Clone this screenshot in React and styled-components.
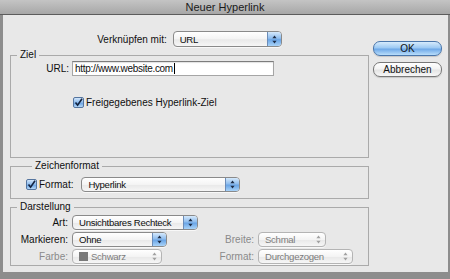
import React from 'react';
import styled, { createGlobalStyle } from 'styled-components';

const GlobalStyle = createGlobalStyle`
  html, body { margin: 0; padding: 0; }
  body {
    font-family: "Liberation Sans", Arial, sans-serif;
    font-size: 10px;
    color: #0f0f0f;
  }
`;

const Window = styled.div`
  width: 450px;
  height: 279px;
  background: #8d8d8d;
  display: flex;
  flex-direction: column;
`;

const TitleBar = styled.div`
  height: 14px;
  flex: none;
  background: linear-gradient(#c4c4c4, #a7a7a7);
  border-bottom: 1px solid #5c5c5c;
  display: flex;
  align-items: center;
  justify-content: center;
  font-size: 11px;
  color: #1a1a1a;
`;

const Body = styled.div`
  flex: 1;
  margin: 0 2px 7px 3px;
  background: #e8e8e8;
  display: flex;
  padding: 16px 6px 0 7px;
`;

const Main = styled.div`
  width: 359px;
  display: flex;
  flex-direction: column;
`;

const Buttons = styled.div`
  margin-left: 4px;
  width: 69px;
  display: flex;
  flex-direction: column;
  gap: 6px;
  padding-top: 10px;
`;

const Button = styled.div`
  height: 13px;
  border-radius: 7px;
  display: flex;
  align-items: center;
  justify-content: center;
  font-size: 10px;
  color: #111;
  border: 1px solid ${p => (p.$primary ? '#4a76ab' : '#777')};
  background: ${p =>
    p.$primary
      ? 'linear-gradient(#d6ebfc, #9cc9f3 45%, #6fa9e8 55%, #b9defb)'
      : 'linear-gradient(#ffffff, #f3f3f3 45%, #e4e4e4 55%, #f7f7f7)'};
  box-shadow: 0 1px 1px rgba(0, 0, 0, 0.15);
`;

const TopRow = styled.div`
  display: flex;
  justify-content: center;
  align-items: center;
  gap: 6px;
  height: 16px;
`;

const Label = styled.span`
  color: ${p => (p.$disabled ? '#8a8a8a' : '#0f0f0f')};
  white-space: nowrap;
`;

const Group = styled.fieldset`
  margin: 2px 0 0 0;
  padding: ${p => p.$pad};
  border: 1px solid #aaaaaa;
  min-width: 0;
  height: ${p => p.$h}px;
  box-sizing: border-box;
`;

const Legend = styled.legend`
  padding: 0 3px;
  margin-left: 6px;
  line-height: 12px;
  font-size: 10px;
`;

const Row = styled.div`
  display: flex;
  align-items: center;
  gap: ${p => p.$gap || 3}px;
  padding-left: ${p => p.$indent || 0}px;
  margin-top: ${p => p.$mt || 0}px;
`;

const FieldLabel = styled(Label)`
  width: 58px;
  text-align: right;
`;

const TextInput = styled.div`
  width: 202px;
  height: 15px;
  box-sizing: border-box;
  background: #fff;
  border: 1px solid #a5a5a5;
  border-top-color: #7c7c7c;
  box-shadow: inset 0 1px 1px rgba(0, 0, 0, 0.12);
  display: flex;
  align-items: center;
  padding-left: 2px;
  font-size: 10px;
  letter-spacing: -0.3px;
`;

const Caret = styled.span`
  width: 1px;
  height: 11px;
  margin-left: 1px;
  background: #000;
`;

const Box = styled.span`
  width: 11px;
  height: 11px;
  box-sizing: border-box;
  border: 1px solid #55759f;
  border-radius: 2px;
  background: linear-gradient(#d2e6fb, #8ab9ec 50%, #6aa3e4 55%, #b5d8f8);
  display: flex;
  align-items: center;
  justify-content: center;
  flex: none;
`;

const Grid = styled.div`
  display: grid;
  grid-template-columns: 57px 134px 44px auto;
  grid-auto-rows: 17px;
  column-gap: 4px;
  align-items: center;
`;

const GridLabel = styled(Label)`
  text-align: right;
`;

const Popup = styled.div`
  width: ${p => p.$w}px;
  height: ${p => p.$h || 15}px;
  box-sizing: border-box;
  border: 1px solid ${p => (p.$disabled ? '#b4b4b4' : '#8a8a8a')};
  border-radius: 4px;
  background: linear-gradient(#ffffff, #f4f4f4 50%, #e9e9e9 55%, #f6f6f6);
  display: flex;
  align-items: center;
  padding-left: 6px;
  font-size: 9.6px;
  letter-spacing: -0.3px;
  color: ${p => (p.$disabled ? '#7c7c7c' : '#0f0f0f')};
  overflow: hidden;
  white-space: nowrap;
  box-shadow: 0 1px 0 rgba(255, 255, 255, 0.7);
`;

const Cap = styled.span`
  margin-left: auto;
  width: 13px;
  flex: none;
  align-self: stretch;
  display: flex;
  align-items: center;
  justify-content: center;
  background: ${p =>
    p.$disabled ? 'transparent' : 'linear-gradient(#d5e9fc, #8fbdee 45%, #6aa5e6 55%, #a9d3f8)'};
  border-left: 1px solid ${p => (p.$disabled ? 'transparent' : '#6b8cb8')};
`;

const Swatch = styled.span`
  width: 9px;
  height: 9px;
  background: #7a7a7a;
  margin-right: 3px;
  flex: none;
`;

const Arrows = ({ color }) => (
  <svg width="5" height="9" viewBox="0 0 5 9">
    <path d="M2.5 0.5 L4.6 3.2 H0.4 Z" fill={color} />
    <path d="M2.5 8.5 L4.6 5.8 H0.4 Z" fill={color} />
  </svg>
);

const Select = ({ w, h, disabled, swatch, children }) => (
  <Popup $w={w} $h={h} $disabled={disabled}>
    {swatch && <Swatch />}
    {children}
    <Cap $disabled={disabled}>
      <Arrows color={disabled ? '#a0a0a0' : '#1c2b45'} />
    </Cap>
  </Popup>
);

const Check = () => (
  <Box>
    <svg width="9" height="9" viewBox="0 0 9 9">
      <path d="M1.5 4.5 L3.6 7.2 L8 0.8" stroke="#13233f" strokeWidth="1.6" fill="none" />
    </svg>
  </Box>
);

export default function App() {
  return (
    <>
      <GlobalStyle />
      <Window>
        <TitleBar>Neuer Hyperlink</TitleBar>
        <Body>
          <Main>
            <TopRow>
              <Label>Verknüpfen mit:</Label>
              <Select w={109} h={16}>URL</Select>
            </TopRow>

            <Group $h={109} $pad="0">
              <Legend>Ziel</Legend>
              <Row>
                <FieldLabel>URL:</FieldLabel>
                <TextInput>
                  http://www.website.com
                  <Caret />
                </TextInput>
              </Row>
              <Row $indent={62} $mt={21} $gap={2}>
                <Check />
                <Label>Freigegebenes Hyperlink-Ziel</Label>
              </Row>
            </Group>

            <Group $h={39} $pad="5px 0 0 15px">
              <Legend>Zeichenformat</Legend>
              <Row $gap={2}>
                <Check />
                <Label>Format:</Label>
                <span style={{ width: 4 }} />
                <Select w={159}>Hyperlink</Select>
              </Row>
            </Group>

            <Group $h={65} $pad="1px 0 0 0">
              <Legend>Darstellung</Legend>
              <Grid>
                <GridLabel>Art:</GridLabel>
                <Select w={126}>Unsichtbares Rechteck</Select>
                <span />
                <span />
                <GridLabel>Markieren:</GridLabel>
                <Select w={95}>Ohne</Select>
                <GridLabel $disabled>Breite:</GridLabel>
                <Select w={68} disabled>Schmal</Select>
                <GridLabel $disabled>Farbe:</GridLabel>
                <Select w={90} disabled swatch>Schwarz</Select>
                <GridLabel $disabled>Format:</GridLabel>
                <Select w={95} disabled>Durchgezogen</Select>
              </Grid>
            </Group>
          </Main>
          <Buttons>
            <Button $primary>OK</Button>
            <Button>Abbrechen</Button>
          </Buttons>
        </Body>
      </Window>
    </>
  );
}
